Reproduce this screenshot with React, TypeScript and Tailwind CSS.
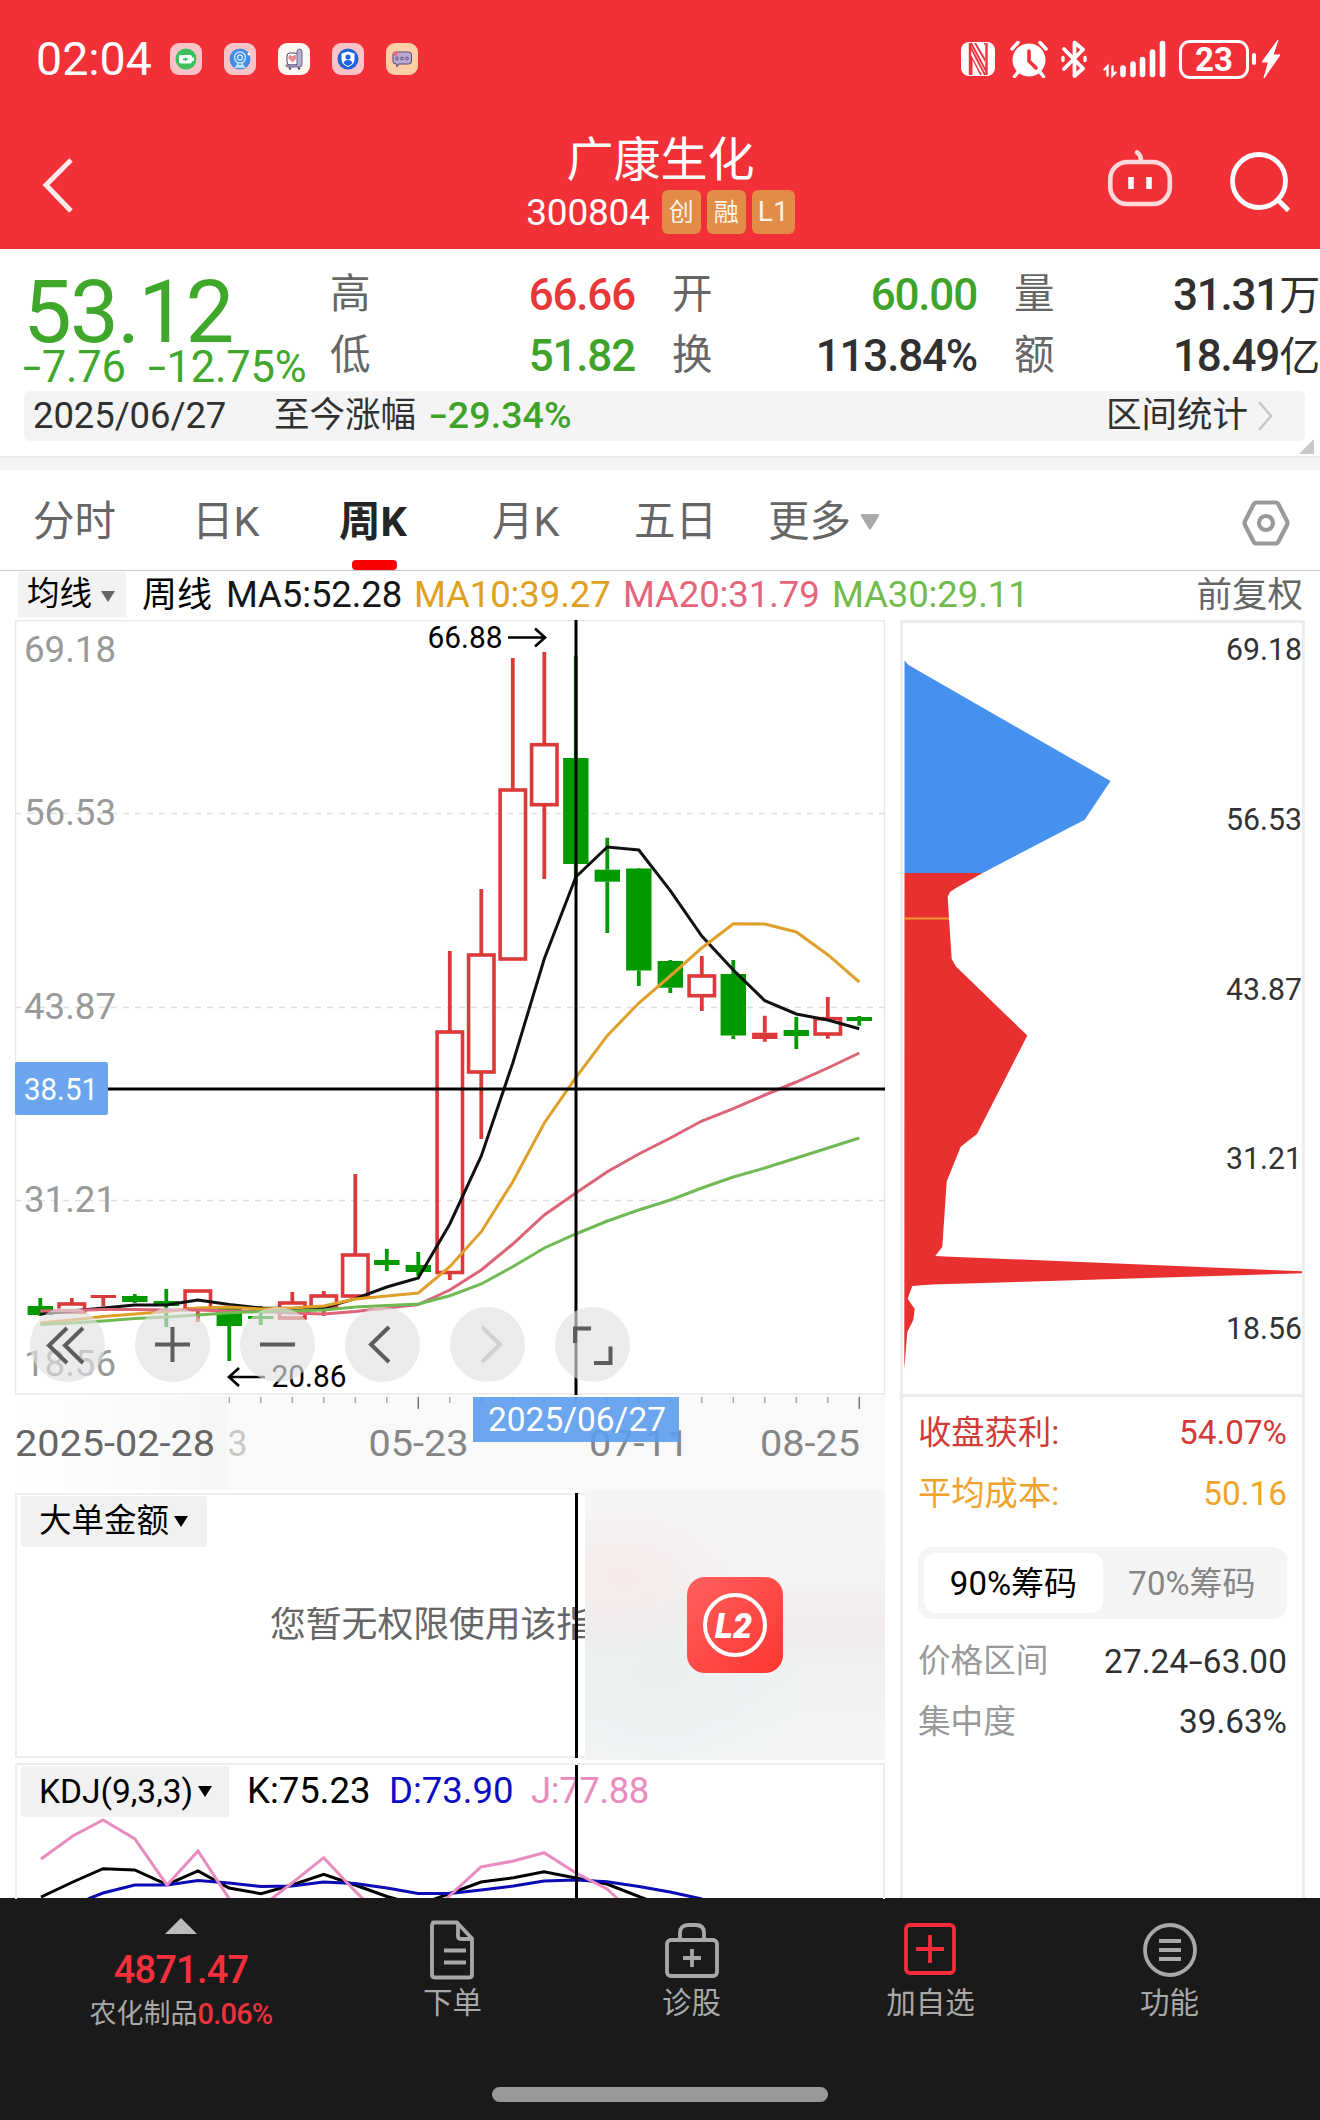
import type { ReactNode } from "react";
import clsx from "clsx";

type Candle = {
  kind: "up" | "down" | "flat";
  top: number;
  bottom: number;
  high: number;
  low: number;
};

const RED = "#dc3a3a";
const GREEN = "#009900";

const xAt = (i: number) => 40.3 + i * 31.5;

const candles: Candle[] = [
  { kind: "down", top: 1306, bottom: 1315, high: 1298, low: 1316 },
  { kind: "up", top: 1304, bottom: 1312, high: 1298, low: 1312 },
  { kind: "flat", top: 1295, bottom: 1298, high: 1296, low: 1306 },
  { kind: "down", top: 1296, bottom: 1302, high: 1294, low: 1303 },
  { kind: "down", top: 1301, bottom: 1306, high: 1289, low: 1327 },
  { kind: "up", top: 1291, bottom: 1309, high: 1291, low: 1322 },
  { kind: "down", top: 1306, bottom: 1326, high: 1306, low: 1361 },
  { kind: "down", top: 1316, bottom: 1319, high: 1306, low: 1325 },
  { kind: "up", top: 1303, bottom: 1318, high: 1292, low: 1320 },
  { kind: "up", top: 1296, bottom: 1308, high: 1291, low: 1316 },
  { kind: "up", top: 1255, bottom: 1296, high: 1174, low: 1296 },
  { kind: "down", top: 1260, bottom: 1265, high: 1249, low: 1271 },
  { kind: "down", top: 1265, bottom: 1272, high: 1252, low: 1276 },
  { kind: "up", top: 1032, bottom: 1272.5, high: 951, low: 1280 },
  { kind: "up", top: 955, bottom: 1072, high: 889, low: 1139 },
  { kind: "up", top: 790, bottom: 959, high: 658, low: 959 },
  { kind: "up", top: 744.7, bottom: 804.7, high: 652, low: 879 },
  { kind: "down", top: 758, bottom: 864, high: 656, low: 885 },
  { kind: "down", top: 869.7, bottom: 881.7, high: 837.7, low: 933 },
  { kind: "down", top: 868.5, bottom: 970.5, high: 868, low: 986 },
  { kind: "down", top: 961, bottom: 987.7, high: 960, low: 993 },
  { kind: "up", top: 976, bottom: 995.7, high: 956, low: 1011 },
  { kind: "down", top: 974, bottom: 1035.5, high: 960, low: 1039 },
  { kind: "flat", top: 1032.7, bottom: 1039, high: 1015.7, low: 1041.7 },
  { kind: "down", top: 1030, bottom: 1036, high: 1017, low: 1049 },
  { kind: "up", top: 1018.7, bottom: 1034, high: 997, low: 1038.7 },
  { kind: "down", top: 1017, bottom: 1021, high: 1016, low: 1025.7 },
];

const ma5 = [1314, 1311, 1308, 1305, 1305, 1300, 1304.5, 1308, 1308.5, 1308, 1298.6, 1287, 1278, 1224, 1156, 1063, 958.7, 877, 847, 850, 890.7, 936, 970, 1000.7, 1014, 1020, 1028.7];
const ma10 = [1323, 1320, 1316.5, 1314, 1311.6, 1308, 1307, 1309, 1308, 1306, 1299, 1296, 1293, 1266.7, 1231.7, 1181.7, 1123, 1077.7, 1035.7, 1003, 976, 948, 923.7, 924, 932, 954.7, 982];
const ma20 = [1311, 1310.5, 1309.5, 1309.5, 1310, 1310, 1311, 1311.6, 1313, 1314, 1311.6, 1308, 1304.6, 1290, 1270, 1244, 1215, 1193, 1171.7, 1154, 1138, 1121, 1108.7, 1095, 1082, 1068, 1053];
const ma30 = [1324.6, 1323, 1321, 1318.6, 1317, 1315, 1312.7, 1311.6, 1311, 1310, 1307, 1305.6, 1304, 1295.7, 1284, 1266.7, 1248, 1234, 1221, 1210, 1200, 1188, 1177, 1168, 1158, 1148, 1138];

const toPoints = (values: number[]) => values.map((y, i) => `${xAt(i)},${y}`).join(" ");

const quotes = [
  [
    { label: "高", value: "66.66", color: "text-[#e8383a]" },
    { label: "低", value: "51.82", color: "text-[#3fa32a]" },
  ],
  [
    { label: "开", value: "60.00", color: "text-[#3fa32a]" },
    { label: "换", value: "113.84%", color: "text-[#303030]" },
  ],
  [
    { label: "量", value: "31.31万", color: "text-[#303030]" },
    { label: "额", value: "18.49亿", color: "text-[#303030]" },
  ],
];

const tabs = [
  { label: "分时", width: "w-[159px]" },
  { label: "日K", width: "w-[147px]" },
  { label: "周K", width: "w-[153px]", active: true },
  { label: "月K", width: "w-[142px]" },
  { label: "五日", width: "w-[134px]" },
];

// Widens the hyphens so that they sit between digits like a minus sign
const Num = ({ children }: { children: string }) => (
  <>
    {children.split(/(-)/).map((part, i) =>
      part === "-" ? (
        <span key={i} className="mx-[0.08em] inline-block scale-x-150">-</span>
      ) : (
        part
      )
    )}
  </>
);

const AppDot = ({ bg, children }: { bg: string; children: ReactNode }) => (
  <div className={clsx("h-8 w-8 overflow-hidden rounded-[9px]", bg)}>
    <svg viewBox="0 0 32 32" className="h-8 w-8" fill="none">{children}</svg>
  </div>
);

const StatusBar = () => (
  <div className="flex h-[118px] items-center justify-between pl-[36px] pr-[40px]">
    <div className="flex items-center">
      <span className="w-[134px] text-[46.500px] leading-none">02:04</span>
      <div className="flex gap-[22px]">
        <AppDot bg="bg-[#fbc3c8]">
          <circle cx="16" cy="16" r="10.5" fill="#3cbf5c" />
          <rect x="9" y="12" width="13" height="8.5" rx="2" fill="#fff" />
          <path d="M23 14.5v3.5" stroke="#fff" strokeWidth="2" />
          <path d="M13 16.2h5M15.5 14.5v3.5" stroke="#3cbf5c" strokeWidth="1.4" />
        </AppDot>
        <AppDot bg="bg-[#fbc3c8]">
          <circle cx="16" cy="16" r="10.5" fill="#3f8ee8" />
          <circle cx="16" cy="14.5" r="5.5" stroke="#cfe6ff" strokeWidth="1.4" />
          <circle cx="16" cy="14.5" r="2.5" stroke="#cfe6ff" strokeWidth="1.3" />
          <path d="M14 20l-1 2.500h6l-1-2.500M11 24h10" stroke="#cfe6ff" strokeWidth="1.3" />
          <circle cx="25" cy="11" r="1.5" fill="#fff" />
        </AppDot>
        <AppDot bg="bg-[#fdf8f3]">
          <rect x="9" y="10" width="11" height="12" rx="3" fill="#fff" stroke="#4d4560" strokeWidth="1" />
          <path d="M19 9q0-3 2.500-3t2.500 3v12q0 3-3 3H10q-2 0-2-2h11z" fill="#b9aed6" stroke="#6a6080" strokeWidth="1" />
          <path d="M14.500 19.500l-4-4q-.5-3 2-3.500l2 1.200 2-1.200q2.500.5 2 3.500z" fill="#ef8a95" />
          <circle cx="12" cy="25.500" r="1.200" fill="#4d4560" />
          <circle cx="21" cy="25.500" r="1.200" fill="#4d4560" />
        </AppDot>
        <AppDot bg="bg-[#fbc3c8]">
          <circle cx="16" cy="16" r="10.500" fill="#1f62de" />
          <path d="M16 8.500l6.500 2v6q0 5-6.500 7.500-6.500-2.500-6.500-7.500v-6z" fill="#fff" />
          <circle cx="16" cy="14" r="2.600" fill="#1f62de" />
          <path d="M11.500 20q1-3 4.500-3t4.500 3q-2 2-4.500 3-2.500-1-4.500-3z" fill="#1f62de" />
        </AppDot>
        <AppDot bg="bg-[#fdcfa6]">
          <path d="M10 9h12q3.500 0 3.500 3.500v5q0 3.500-3.500 3.500h-9l-2 2.500-.5-2.500Q7 21 7 17.500v-5Q7 9 10 9z" fill="#b9a9d3" stroke="#5c4f74" strokeWidth="1.100" />
          <path d="M9.500 13.500l-2.500-3q0-2.500 2.500-1.500 2.500-1 2.500 1.500z" fill="#ee6673" />
          <g stroke="#5c4f74" strokeWidth="1">
            <circle cx="11" cy="15.500" r="1.400" />
            <circle cx="16" cy="15.500" r="1.400" />
            <circle cx="21" cy="15.500" r="1.400" />
          </g>
        </AppDot>
      </div>
    </div>
    <div className="flex items-center">
      <svg viewBox="0 0 34 34" className="mr-[15px] h-[34px] w-[34px]">
        <rect width="34" height="34" rx="8" fill="#fff" />
        <g stroke="#f23038" fill="none" strokeWidth="2.400">
          <path d="M9 1v32M25.500 1v32" />
          <path d="M9 4L24 33M10 1L25 29" strokeWidth="1.800" />
        </g>
        <path d="M10 13L21 33h-11z" fill="#f23038" />
        <path d="M13 1h11v19z" fill="#f23038" />
        <path d="M14.500 0h8l1.500 4v12zM11.500 18v16h8z" fill="#fff" />
      </svg>
      <svg viewBox="0 0 38 38" className="mr-[13px] h-[38px] w-[38px]">
        <circle cx="19" cy="20" r="16.500" fill="#fff" />
        <path d="M2 9l6-6.500M36 9l-6-6.500M8 32l-3.500 4.500M30 32l3.500 4.500" stroke="#fff" strokeWidth="3.500" strokeLinecap="round" />
        <path d="M19 11v10l7 7" stroke="#f23038" strokeWidth="3.600" fill="none" strokeLinecap="round" />
      </svg>
      <svg viewBox="0 0 26 38" className="mr-[15px] h-[38px] w-[26px]" fill="none" stroke="#fff" strokeWidth="3.800" strokeLinecap="round" strokeLinejoin="round">
        <path d="M3 9l19 19.500-8.500 7.500V2.500L22 9.500 3 29" />
        <path d="M2 17.500v3M24 17.500v3" strokeWidth="3.400" />
      </svg>
      <svg viewBox="0 0 64 38" className="mr-[13px] h-[38px] w-[64px]" stroke="#fff" fill="none" strokeLinecap="round">
        <path d="M5.500 35.500v-9l-3 3M10.500 26.500v9l3-3" strokeWidth="2.400" />
        <path d="M21 28v6.500M31 24v10.500M40.500 19.500v15M50.500 12v22.500M60.500 3.500v31" strokeWidth="5.600" />
      </svg>
      <div className="flex h-[39px] w-[70px] items-center justify-center rounded-[11px] border-[3px] border-white text-[33px] font-bold leading-none">
        23
      </div>
      <div className="ml-[3px] h-3 w-1 rounded-full bg-white" />
      <svg viewBox="0 0 18 38" className="ml-[6px] h-[38px] w-[18px]">
        <path d="M16 0L0 22h6.500L2 38 18 15H11z" fill="#fff" stroke="#fff" strokeWidth="1" strokeLinejoin="round" />
      </svg>
    </div>
  </div>
);

const TitleBar = () => (
  <div className="flex h-[131px] items-start justify-between pl-[41px] pr-[30px]">
    <svg viewBox="0 0 36 60" className="mt-[37px] h-[60px] w-[160px]" preserveAspectRatio="xMinYMid meet">
      <path d="M30 5L5 30l25 26" stroke="#ffe9ea" strokeWidth="5" fill="none" />
    </svg>
    <div className="flex flex-col items-center pl-[13px]">
      <h1 className="mt-[18px] text-[47px] font-normal leading-[48px]">广康生化</h1>
      <div className="mt-[6px] flex items-center gap-[6px]">
        <span className="mr-[6px] text-[37px] leading-none tracking-[-0.2px]">300804</span>
        {["创", "融", "L1"].map((tag) => (
          <span
            key={tag}
            className={clsx(
              "flex h-[44px] items-center justify-center rounded-md bg-[#e28c47] text-[25px] leading-none text-[#fff3e4]",
              tag === "L1" ? "w-[43px] text-[28px]" : "w-[39px]"
            )}
          >
            {tag}
          </span>
        ))}
      </div>
    </div>
    <div className="flex items-start gap-[57px]">
      <svg viewBox="0 0 66 60" className="mt-[31px] h-[60px] w-[66px]" fill="none" stroke="#ffd9da" strokeWidth="4.600" strokeLinecap="round">
        <rect x="3.300" y="13" width="59.500" height="42" rx="17" />
        <path d="M30 3.500q4 2.500 4 8.500" />
        <path d="M24 28v12M42 28v12" stroke="#fff" strokeWidth="5.500" strokeLinecap="butt" />
      </svg>
      <svg viewBox="0 0 60 64" className="mt-[32px] h-[64px] w-[60px]" fill="none" stroke="#fff" strokeWidth="4.800">
        <circle cx="29" cy="31" r="26.500" />
        <path d="M48 50l10.500 10.500" />
      </svg>
    </div>
  </div>
);

const Quote = () => (
  <section className="bg-white">
    <div className="flex h-[142px]">
      <div className="w-[330px] pl-[23px] pt-[32px] text-[#3fa82a]">
        <div className="text-[87px] leading-[62px] tracking-[-1.800px]">53.12</div>
        <div className="flex h-[50px] items-center gap-[22px] whitespace-nowrap text-[43.500px] leading-none tracking-[-0.200px]">
          <span><Num>-7.76</Num></span>
          <span><Num>-12.75%</Num></span>
        </div>
      </div>
      <div className="flex w-[990px] gap-[37px] pt-[15px]">
        {quotes.map((rows, i) => (
          <div key={i} className="w-[305px]">
            {rows.map((row) => (
              <div key={row.label} className="flex h-[61px] items-center justify-between leading-none">
                <span className="text-[40.500px] text-[#666]">{row.label}</span>
                <span className={clsx("pt-px text-[44px] font-medium tracking-[-1.200px]", row.color)}>
                  {row.value.replace(/[万亿]/, "")}
                  <span className="text-[41px] font-normal">{row.value.match(/[万亿]/)?.[0]}</span>
                </span>
              </div>
            ))}
          </div>
        ))}
      </div>
    </div>
    <div className="mx-auto ml-6 flex h-[50px] w-[1281px] items-center rounded-md bg-[#f4f4f4] pl-[9px] pr-[32px] text-[#303030]">
      <span className="w-[241px] text-[36.500px] tracking-[-0.100px]">2025/06/27</span>
      <span className="w-[155px] text-[35.500px]">至今涨幅</span>
      <span className="text-[37.500px] font-medium tracking-[0.100px] text-[#3fa32a]"><Num>-29.34%</Num></span>
      <span className="ml-auto text-[35.500px]">区间统计</span>
      <svg viewBox="0 0 16 30" className="ml-[9px] h-[30px] w-4" fill="none" stroke="#c8c8c8" strokeWidth="2.500">
        <path d="M2 1l12 14L2 29" />
      </svg>
    </div>
    <div className="flex h-[15px] justify-end pr-[6px]">
      <svg viewBox="0 0 15 15" className="-mt-[2px] h-[15px] w-[15px]"><path d="M15 0v15H0z" fill="#c9c9c9" /></svg>
    </div>
    <div className="h-[14px] border-t-2 border-[#ebebeb] bg-[#f4f4f4]" />
  </section>
);

const Tabs = () => (
  <nav className="flex h-[101px] items-center border-b border-[#c8c8c8] pl-[33px] pr-[30px] text-[41.500px] text-[#666]">
    {tabs.map((tab) => (
      <div key={tab.label} className={tab.width}>
        <span className={clsx("relative inline-block pt-[4px] leading-[96px]", tab.active && "font-bold text-[#252525]")}>
          {tab.label}
          {tab.active && <i className="absolute bottom-0 left-[13px] h-[10px] w-[45px] rounded bg-[#fb0000]" />}
        </span>
      </div>
    ))}
    <span className="pt-[4px]">更多</span>
    <svg viewBox="0 0 20 16" className="ml-[9px] mt-[4px] h-4 w-5"><path d="M2 0h16q2 0 1 2l-8 13q-1 1.500-2 0L1 2Q0 0 2 0z" fill="#aaa" /></svg>
    <svg viewBox="0 0 48 46" className="ml-auto mt-[6px] h-[46px] w-12" fill="none" stroke="#999" strokeWidth="4.200" strokeLinejoin="round">
      <path d="M14.500 2.500h19q2 0 3 2L45 21q1 2 0 4l-8.500 16.500q-1 2-3 2h-19q-2 0-3-2L3 25q-1-2 0-4l8.500-16.500q1-2 3-2z" />
      <circle cx="24" cy="23" r="7" />
    </svg>
  </nav>
);

const AverageRow = () => (
  <div className="flex h-[49px] items-center whitespace-nowrap pl-[18px] pr-[17px] text-[36.500px] leading-none tracking-[-0.100px]">
    <div className="-mt-[2px] mr-[16px] flex h-[45px] w-[108px] items-center bg-[#f2f2f2] pl-[9px] text-[32.500px] tracking-normal text-black">
      均线
      <svg viewBox="0 0 14 11" className="ml-[9px] mt-[3px] h-[11px] w-[14px]"><path d="M0 0h14L7 11z" fill="#666" /></svg>
    </div>
    <span className="w-[84px] text-[35px] tracking-normal text-black">周线</span>
    <span className="w-[188px] text-[#161616]">MA5:52.28</span>
    <span className="w-[209px] text-[#e0a020]">MA10:39.27</span>
    <span className="w-[209px] text-[#e5647a]">MA20:31.79</span>
    <span className="text-[#70bb4c]">MA30:29.11</span>
    <span className="ml-auto text-[35.500px] tracking-normal text-[#666]">前复权</span>
  </div>
);

type ChartTextProps = { x: number; y: number; w?: number; size: number; fill: string; children: string };

const ChartText = ({ x, y, w, size, fill, children }: ChartTextProps) => (
  <text x={x} y={y} fontSize={size} fill={fill} textLength={w} lengthAdjust="spacingAndGlyphs">
    {children}
  </text>
);

const CandleChart = () => (
  <div className="relative h-[776px]">
    <svg viewBox="15 620 870 776" className="h-[776px] w-[870px]" fill="none">
      <rect x="15.500" y="620.500" width="869" height="773.500" stroke="#e8e8e8" strokeWidth="1.500" />
      <g stroke="#dedede" strokeWidth="1.300" strokeDasharray="6 6">
        <path d="M15 813.500h870M15 1007.500h870M15 1200.500h870" />
      </g>
      <ChartText x={24} y={662} w={92} size={37} fill="#999">69.18</ChartText>
      <ChartText x={24} y={825} w={92} size={37} fill="#999">56.53</ChartText>
      <ChartText x={24} y={1019} w={92} size={37} fill="#999">43.87</ChartText>
      <ChartText x={24} y={1212} w={92} size={37} fill="#999">31.21</ChartText>
      <ChartText x={24} y={1376} w={92} size={37} fill="#999">18.56</ChartText>
      {candles.map((c, i) => {
        const x = xAt(i);
        const color = c.kind === "down" ? GREEN : RED;
        return (
          <g key={i}>
            <path d={`M${x} ${c.high}V${c.top}M${x} ${c.bottom}V${c.low}`} stroke={color} strokeWidth="3.800" />
            {c.kind === "up" ? (
              <rect x={x - 12.7} y={c.top} width="25.400" height={c.bottom - c.top} stroke={color} strokeWidth="3.600" />
            ) : (
              <rect x={x - 12.7} y={c.top} width="25.400" height={c.bottom - c.top} fill={color} />
            )}
          </g>
        );
      })}
      <g strokeWidth="3">
        <polyline points={toPoints(ma5)} stroke="#111" />
        <polyline points={toPoints(ma10)} stroke="#dfa02a" />
        <polyline points={toPoints(ma20)} stroke="#dd6478" />
        <polyline points={toPoints(ma30)} stroke="#70b955" />
      </g>
      <ChartText x={427.5} y={648} w={75} size={31} fill="#000">66.88</ChartText>
      <path d="M508 637.500h37M535 628.500l10 9-10 9" stroke="#000" strokeWidth="2.700" />
      <ChartText x={271.5} y={1387} w={75} size={31} fill="#000">20.86</ChartText>
      <path d="M265 1377h-36M239 1368l-10 9 10 9" stroke="#000" strokeWidth="2.700" />
      <path d="M576 620v775M108 1089h777" stroke="#000" strokeWidth="3" />
      <rect x="15" y="1062" width="93" height="53" rx="2" fill="#6aa5ee" />
      <ChartText x={24} y={1100} w={74} size={32} fill="#fff">38.51</ChartText>
    </svg>
    <div className="absolute bottom-[14px] left-[15px] flex gap-[30px] text-[#5c5c5c]">
      {[
        "M37 21L19 38.500 37 56M53 21L35 38.500 53 56",
        "M20 37.500h35M37.500 20v35",
        "M20 37.500h35",
        "M44 20L26 37.500 44 55",
        "M32 20l18 17.500L32 55",
        "M20 36V21.500h16M39 56h16.500V39.500",
      ].map((d, i) => (
        <button
          key={d}
          className={clsx(
            "h-[75px] w-[75px] rounded-full bg-[#e1e1e1]/65",
            i === 4 && "text-[#d0d0d0]"
          )}
        >
          <svg viewBox="0 0 75 75" className="h-[75px] w-[75px]" fill="none" stroke="currentColor" strokeWidth="4">
            <path d={d} />
          </svg>
        </button>
      ))}
    </div>
  </div>
);

const DateAxis = () => (
  <svg viewBox="15 1396 870 97" className="h-[97px] w-[870px]">
    <defs>
      <linearGradient id="dateFade" x1="0" x2="1">
        <stop offset="0" stopColor="#fff" />
        <stop offset="1" stopColor="#f6f6f6" />
      </linearGradient>
    </defs>
    <rect x="15" y="1396" width="870" height="94" fill="#f9f9f9" />
    <rect x="15" y="1396" width="212" height="94" fill="url(#dateFade)" />
    <ChartText x={227.5} y={1456} w={20} size={37} fill="#c8c8c8">3</ChartText>
    {Array.from({ length: 21 }, (_, n) => n + 6).map((i) => (
      <path
        key={i}
        d={`M${xAt(i)} 1397v${i === 12 || i === 26 ? 12 : 6}`}
        stroke={i === 12 || i === 26 ? "#777" : "#aaa"}
        strokeWidth="1.500"
      />
    ))}
    <ChartText x={15} y={1456} w={200} size={37} fill="#666">2025-02-28</ChartText>
    <ChartText x={368.5} y={1456} w={100} size={37} fill="#868686">05-23</ChartText>
    <ChartText x={589} y={1456} w={100} size={37} fill="#868686">07-11</ChartText>
    <ChartText x={760} y={1456} w={100} size={37} fill="#868686">08-25</ChartText>
    <rect x="473" y="1397" width="206" height="45" fill="#5b9cec" fillOpacity="0.900" />
    <ChartText x={488} y={1431} w={178} size={34} fill="#fff">2025/06/27</ChartText>
  </svg>
);

const L2Icon = () => (
  <svg viewBox="0 0 96 96" className="h-24 w-24" fill="none">
    <defs>
      <linearGradient id="l2" x1="0" y1="0" x2="1" y2="1">
        <stop offset="0" stopColor="#ff5f60" />
        <stop offset="1" stopColor="#ff3630" />
      </linearGradient>
    </defs>
    <rect width="96" height="96" rx="18" fill="url(#l2)" />
    <circle cx="48" cy="48" r="30" stroke="#fff" strokeWidth="4" />
    <text x="46.500" y="60.500" fontSize="35" fontWeight="900" fontStyle="italic" fill="#fff" textAnchor="middle" textLength="37" lengthAdjust="spacingAndGlyphs">L2</text>
  </svg>
);

const Caret = () => (
  <svg viewBox="0 0 14 11" className="ml-[5px] h-[11px] w-[14px]"><path d="M0 0h14L7 11z" fill="#000" /></svg>
);

const BigOrderPanel = () => (
  <div className="relative mb-[5px] h-[265px] border-2 border-[#ededed]">
    <div className="ml-1 mt-[1px] flex h-[51px] w-[186px] items-center rounded-[3px] bg-[#f1f1f1] pl-[18px] text-[32.500px] leading-none text-black">
      大单金额
      <Caret />
    </div>
    <div className="mt-[60px] w-[568px] overflow-hidden whitespace-nowrap pl-[253px] text-[35.800px] leading-[36px] text-[#666]">
      您暂无权限使用该指标
    </div>
    <div className="absolute -top-[2px] left-[557.500px] h-[265px] w-[3px] bg-black" />
    <div className="absolute -right-[2px] -top-[5px] flex h-[270px] w-[300px] items-center justify-center bg-[radial-gradient(ellipse_at_12%_32%,#f7ebea_0%,transparent_30%),radial-gradient(ellipse_at_25%_68%,#eaf0f0_0%,transparent_45%),linear-gradient(180deg,#f5f5f6_0%,#f4f2f4_35%,#f2ebed_50%,#eff1f2_65%,#f4f5f7_100%)]">
      <L2Icon />
    </div>
  </div>
);

const KdjPanel = () => (
  <div className="relative h-[136px] overflow-hidden border-x-2 border-t-2 border-[#ededed]">
    <div className="flex items-center whitespace-nowrap pt-[1px] text-[36.500px] leading-none">
      <div className="ml-1 flex h-[51px] w-[208px] items-center rounded-[3px] bg-[#f1f1f1] pl-[18px] text-[33.500px] text-black">
        KDJ(9,3,3)
        <Caret />
      </div>
      <span className="ml-[18px] w-[142px] text-black">K:75.23</span>
      <span className="w-[142px] text-[#0c0cc4]">D:73.90</span>
      <span className="tracking-[-0.400px] text-[#e88cc0]">J:77.88</span>
    </div>
    <svg viewBox="17 1818 866 80" className="absolute left-0 top-[53px] h-[80px] w-[866px]" fill="none" strokeWidth="3">
      <polyline stroke="#000" points="41,1897 72.800,1882 103,1868.700 134.700,1870 167,1884.700 198,1871 229,1888 261,1893.700 292,1885 323.700,1874.300 355,1885 387,1896.500 418,1905 450,1893.500 481,1882 513.500,1877.700 544,1871.700 576,1878 607,1884 640,1897 670,1908" />
      <polyline stroke="#0c0cb4" points="88,1899 103,1893 134.700,1885 167,1885 198,1880.600 229,1883 261,1886.500 292,1886 323.700,1882 355,1883.500 387,1888 418,1893.600 450,1893.600 481,1890 513.500,1886 544,1881 576,1880 607,1881.700 639,1886.500 670,1892 702,1899" />
      <polyline stroke="#e88cc0" points="41,1859 72.800,1836 103,1820 134.700,1838.700 167,1885 198,1851 229.400,1899 250,1920 271.500,1899 292,1883 323.700,1857.700 355.600,1891.700 380,1915 430,1917 446,1899 481,1867 513.500,1861 544,1852.700 576,1873 607,1889 618,1899" />
    </svg>
    <div className="absolute left-[557.500px] top-[-2px] h-[138px] w-[3px] bg-black" />
  </div>
);

const ChipPanel = () => (
  <aside className="h-[1278px] w-[405px] border-x-[3px] border-t-[3px] border-[#ececec]">
    <svg viewBox="903 623 399 771" className="block h-[771px] w-[399px]">
      <path fill="#4691ee" d="M904.500 660.500L908.500 665 1110.500 781 1084.700 819.700 982.700 873H904.500z" />
      <path
        fill="#e83030"
        d="M904.500 873h78.200L956 888l-6 4-2.300 4.700 1.300 22 2.700 40.300 4.300 7.600 71.300 69L977 1134l-16.300 12.700-14 34.700-4.400 65.300-7 9.300 9.700.4L1302 1271.300v2L931.700 1284.500 912.300 1286l-4.600 12.800 7 10.200-1.400 11-6 12-3 37z"
      />
      <path d="M904.500 918.500H949" stroke="#f59a30" strokeWidth="2" />
      {["69.18", "56.53", "43.87", "31.21", "18.56"].map((price, i) => (
        <ChartText key={price} x={1226} y={660 + i * 169.8} w={76} size={31} fill="#333">{price}</ChartText>
      ))}
    </svg>
    <div className="border-t-[3px] border-[#ececec] px-[15px] pt-[6px] text-[33.300px] text-[#303030]">
      <div className="flex h-[60px] items-center justify-between text-[#d23a35]">
        <span>收盘获利:</span>
        <span>54.07%</span>
      </div>
      <div className="flex h-[61px] items-center justify-between text-[#efa32d]">
        <span>平均成本:</span>
        <span>50.16</span>
      </div>
      <div className="mb-[12px] mt-[23px] flex h-[72px] w-[369px] items-center rounded-[14px] bg-[#f4f4f4] pl-[6px] text-[33px]">
        <div className="flex h-[60px] w-[179px] items-center justify-center rounded-xl bg-white text-black">90%筹码</div>
        <div className="w-[178px] text-center text-[#868686]">70%筹码</div>
      </div>
      <div className="flex h-[61px] items-center justify-between">
        <span className="text-[32.600px] text-[#999]">价格区间</span>
        <span className="tracking-[0.100px]"><Num>27.24-63.00</Num></span>
      </div>
      <div className="flex h-[60px] items-center justify-between">
        <span className="text-[32.600px] text-[#999]">集中度</span>
        <span>39.63%</span>
      </div>
    </div>
  </aside>
);

const navItems = [
  {
    label: "下单",
    icon: (
      <>
        <path d="M7 2.500h24l15 16v36q0 3-3 3H9q-3 0-3-3v-49q0-3 3-3z" />
        <path d="M32 3v13q0 3 3 3h11M18 30.500h22M18 42.500h22" />
      </>
    ),
  },
  {
    label: "诊股",
    icon: (
      <>
        <rect x="2" y="20" width="50" height="36" rx="4" />
        <path d="M15 20v-7q0-8 8-8h8q8 0 8 8v7M27 29v18M18 38h18" />
      </>
    ),
  },
  {
    label: "加自选",
    color: "text-[#fa2c3c]",
    icon: (
      <>
        <rect x="2" y="5" width="48" height="48" rx="4" />
        <path d="M26 15v28M12 29h28" />
      </>
    ),
  },
  {
    label: "功能",
    icon: (
      <>
        <circle cx="27" cy="30" r="25" />
        <path d="M16 21h22M16 30h22M16 39h22" />
      </>
    ),
  },
];

const BottomNav = () => (
  <footer className="flex h-[222px] flex-col bg-[#1a1a1a] text-[#a8a8a8]">
    <div className="flex h-[189px]">
      <div className="flex w-[333px] flex-col items-center pl-[29px] pt-[20px]">
        <svg viewBox="0 0 32 16" className="h-4 w-8"><path d="M16 0l16 16H0z" fill="#bdbdbd" /></svg>
        <div className="mt-[17px] text-[38px] font-medium leading-[38px] tracking-[-0.800px] text-[#fa2f3c]">4871.47</div>
        <div className="mt-[9px] flex items-center whitespace-nowrap text-[27px] leading-[32px]">
          农化制品
          <span className="text-[29px] font-medium tracking-[-0.800px] text-[#e8323e]">0.06%</span>
        </div>
      </div>
      {navItems.map((item) => (
        <div key={item.label} className="flex w-[239px] flex-col items-center pt-[22px]">
          <svg viewBox="0 0 54 60" className={clsx("h-[60px] w-[54px]", item.color)} fill="none" stroke="currentColor" strokeWidth="3.800" strokeLinejoin="round">
            {item.icon}
          </svg>
          <span className="mt-[6px] text-[29.500px] leading-[34px]">{item.label}</span>
        </div>
      ))}
    </div>
    <div className="mx-auto h-[15px] w-[336px] rounded-full bg-[#999]" />
  </footer>
);

const App = () => {
  return (
    <div className="h-[2120px] w-[1320px] overflow-hidden bg-white font-['Roboto','Noto_Sans_CJK_SC',sans-serif] leading-none">
      <header className="h-[249px] bg-[#f23038] text-white">
        <StatusBar />
        <TitleBar />
      </header>
      <Quote />
      <Tabs />
      <AverageRow />
      <main className="flex h-[1278px] gap-[15px] pl-[15px]">
        <div className="w-[870px]">
          <CandleChart />
          <DateAxis />
          <BigOrderPanel />
          <KdjPanel />
        </div>
        <ChipPanel />
      </main>
      <BottomNav />
    </div>
  );
};

export default App;
